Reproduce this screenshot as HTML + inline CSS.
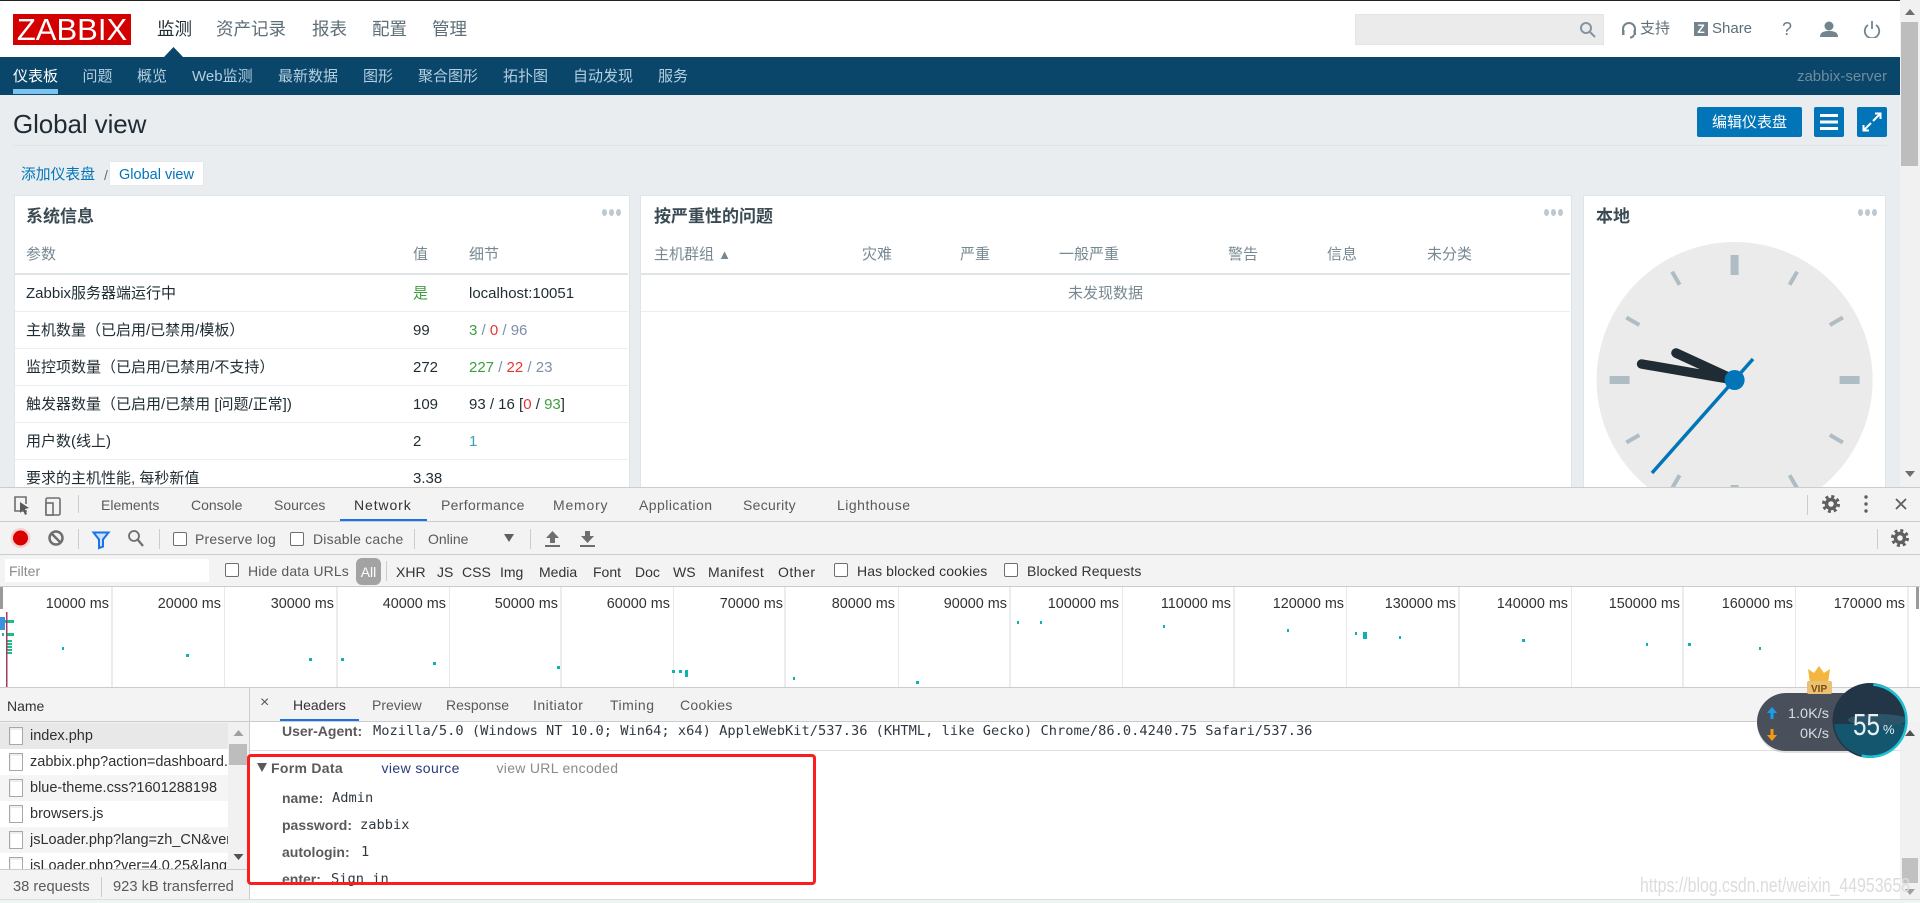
<!DOCTYPE html>
<html lang="zh"><head><meta charset="utf-8"><title>Zabbix Global view</title>
<style>
html,body{margin:0;padding:0;width:1920px;height:903px;overflow:hidden;background:#fff}
body{position:relative;font-family:"Liberation Sans","Noto Sans CJK SC",sans-serif;font-size:14px;color:#1f2c33}
.a{position:absolute;white-space:nowrap;line-height:20px;display:block}
.b{position:absolute;display:block}
#page{position:absolute;left:0;top:0;width:1920px;height:487px;overflow:hidden;background:#e9edf0}
.tn{font-size:17.5px;color:#5d6e78;top:19px}
.sn{font-size:15px;color:#b4cfe0;top:67px}
.wg{background:#fff;border:1px solid #dfe4e7;border-bottom:0;top:195px;height:300px}
.wt{font-size:17px;font-weight:bold;color:#3a4a52;top:207px}
.dots{font-size:0;top:209px;width:21px;height:8px}
.dots i{display:inline-block;width:5px;height:7px;border-radius:50%;background:#bdc9d0;margin-right:2px}
.th{font-size:15px;color:#778892;top:245px}
.td{font-size:15px;color:#1f2c33}
.ln{height:1px;background:#ebeef0}
.g{color:#3f9c3f}.r{color:#e33734}.s{color:#7d8ea6}
#dt{position:absolute;left:0;top:487px;width:1920px;height:416px;background:#f3f3f3;overflow:hidden}
.dl{color:#5a5a5a;font-size:14px}
.cb{position:absolute;width:12px;height:12px;border:1px solid #6e6e6e;border-radius:2px;background:#fff}
.dv{position:absolute;width:1px;background:#ccc}
.hl{position:absolute;height:1px;background:#ccc;left:0;width:1920px}
.fi{position:absolute;left:9px;width:12px;height:16px;background:#fff;border:1px solid #a8a8a8;box-shadow:inset 2px 3px 0 -1px #eee}
.fn{left:30px;color:#303030;font-size:14.5px;width:198px;overflow:hidden}
.mk{font-weight:bold;color:#5a5a5a;font-size:14px;left:282px}
.mv{font-family:"DejaVu Sans Mono","Liberation Mono",monospace;font-size:13.7px;color:#303942}
</style></head><body>
<div id="page">
<div class="b" style="left:0;top:0;width:1920px;height:57px;background:#fff"></div>
<div class="b" style="left:0;top:0;width:1920px;height:1px;background:#222"></div>
<div class="a" style="left:13px;top:14px;width:118px;height:31px;background:#d40000;color:#fff;font-size:31px;line-height:32px;text-align:center;overflow:hidden">ZABBIX</div>
<span class="a tn" style="left:157px;color:#1f2c33">监测</span>
<span class="a tn" style="left:216px">资产记录</span>
<span class="a tn" style="left:312px">报表</span>
<span class="a tn" style="left:372px">配置</span>
<span class="a tn" style="left:432px">管理</span>
<svg class="b" style="left:160px;top:46px" width="28" height="12"><path d="M4 11 L13.5 1 L23 11Z" fill="#0a466a"/></svg>

<div class="b" style="left:1355px;top:14px;width:247px;height:29px;background:#ebebeb;border:1px solid #e4e4e4"></div>
<svg class="b" style="left:1577px;top:20px" width="20" height="20" fill="none" stroke="#8594a0" stroke-width="2"><circle cx="9" cy="8" r="5"/><path d="M13 12l5 5"/></svg>
<svg class="b" style="left:1620px;top:20px" width="18" height="20" fill="none" stroke="#74848e" stroke-width="2"><path d="M3 14V9a6 6 0 0 1 12 0v5"/><rect x="2" y="10" width="2.5" height="5" fill="#74848e" stroke="none"/><rect x="13.5" y="10" width="2.5" height="5" fill="#74848e" stroke="none"/><path d="M14 15c-1 2-2 2.500-4 2.500"/></svg>
<span class="a" style="left:1640px;top:19px;font-size:15px;color:#5d6e78">支持</span>
<div class="a" style="left:1694px;top:22px;width:14px;height:14px;background:#74848e;color:#fff;font:bold 12px/14px 'Liberation Sans',sans-serif;text-align:center">Z</div>
<span class="a" style="left:1712px;top:19px;font-size:15px;color:#5d6e78">Share</span>
<span class="a" style="left:1782px;top:19px;font-size:18px;color:#6c7c86">?</span>
<svg class="b" style="left:1819px;top:20px" width="20" height="18" fill="#74848e"><circle cx="10" cy="6" r="4.500"/><path d="M1 17c0-5 4-6 9-6s9 1 9 6z"/></svg>
<svg class="b" style="left:1863px;top:20px" width="18" height="18" fill="none" stroke="#74848e" stroke-width="1.8"><path d="M5 5a7.200 7.200 0 1 0 8 0M9 1v8"/></svg>

<div class="b" style="left:0;top:57px;width:1900px;height:38px;background:#0a466a"></div>
<span class="a sn" style="left:13px;color:#fff">仪表板</span>
<div class="b" style="left:13px;top:89px;width:45px;height:5px;background:#7cc2ee"></div>
<span class="a sn" style="left:82.500px">问题</span>
<span class="a sn" style="left:137px">概览</span>
<span class="a sn" style="left:192px">Web监测</span>
<span class="a sn" style="left:278px">最新数据</span>
<span class="a sn" style="left:363px">图形</span>
<span class="a sn" style="left:418px">聚合图形</span>
<span class="a sn" style="left:503px">拓扑图</span>
<span class="a sn" style="left:573px">自动发现</span>
<span class="a sn" style="left:658px">服务</span>
<span class="a" style="right:33px;top:67px;font-size:15px;color:#6f8b9c">zabbix-server</span>

<span class="a" style="left:13px;top:110px;font-size:26px;line-height:28px;color:#1f2c33;letter-spacing:-.1px">Global view</span>
<div class="b" style="left:13px;top:145px;width:1874px;height:1px;background:#dfe4e7"></div>
<div class="a" style="left:1697px;top:107px;width:105px;height:30px;line-height:32px;background:#0275b8;color:#fff;text-align:center;font-size:15px;border-radius:2px">编辑仪表盘</div>
<div class="b" style="left:1814px;top:107px;width:30px;height:30px;background:#0275b8;border-radius:2px"><svg width="30" height="30" fill="#fff"><rect x="6" y="7" width="18" height="3"/><rect x="6" y="13.500" width="18" height="3"/><rect x="6" y="20" width="18" height="3"/></svg></div>
<div class="b" style="left:1857px;top:107px;width:30px;height:30px;background:#0275b8;border-radius:2px"><svg width="30" height="30" fill="none" stroke="#fff" stroke-width="2"><path d="M16 14l7-7M18 6.500h5.500V12M14 16l-7 7M6.500 18v5.500H12"/></svg></div>

<span class="a" style="left:21px;top:165px;font-size:14.800px;color:#0275b8">添加仪表盘</span>
<span class="a" style="left:104px;top:165px;font-size:14px;color:#5d6e78">/</span>
<div class="a" style="left:109px;top:161px;width:95px;height:25px;line-height:27px;background:#fff;border:1px solid #e6e9eb;box-sizing:border-box;color:#0275b8;text-align:center;font-size:14.500px">Global view</div>

<div class="b wg" style="left:14px;width:614px"></div>
<div class="b wg" style="left:640px;width:930px"></div>
<div class="b wg" style="left:1583px;width:301px"></div>

<span class="a wt" style="left:26px">系统信息</span>
<div class="b dots" style="left:602px"><i></i><i></i><i></i></div>
<span class="a th" style="left:26px">参数</span><span class="a th" style="left:413px">值</span><span class="a th" style="left:469px">细节</span>
<div class="b" style="left:15px;top:273px;width:613px;height:2px;background:#dfe4e7"></div>
<span class="a td" style="left:26px;top:284px">Zabbix服务器端运行中</span><span class="a td g" style="left:413px;top:284px">是</span><span class="a td" style="left:469px;top:284px">localhost:10051</span>
<div class="b ln" style="left:15px;top:311px;width:613px"></div>
<span class="a td" style="left:26px;top:321px">主机数量（已启用/已禁用/模板）</span><span class="a td" style="left:413px;top:321px">99</span><span class="a td" style="left:469px;top:321px"><span class="g">3</span> <span class="s">/</span> <span class="r">0</span> <span class="s">/ 96</span></span>
<div class="b ln" style="left:15px;top:348px;width:613px"></div>
<span class="a td" style="left:26px;top:358px">监控项数量（已启用/已禁用/不支持）</span><span class="a td" style="left:413px;top:358px">272</span><span class="a td" style="left:469px;top:358px"><span class="g">227</span> <span class="s">/</span> <span class="r">22</span> <span class="s">/ 23</span></span>
<div class="b ln" style="left:15px;top:385px;width:613px"></div>
<span class="a td" style="left:26px;top:395px">触发器数量（已启用/已禁用 [问题/正常])</span><span class="a td" style="left:413px;top:395px">109</span><span class="a td" style="left:469px;top:395px">93 / 16 [<span class="r">0</span> / <span class="g">93</span>]</span>
<div class="b ln" style="left:15px;top:422px;width:613px"></div>
<span class="a td" style="left:26px;top:432px">用户数(线上)</span><span class="a td" style="left:413px;top:432px">2</span><span class="a td" style="left:469px;top:432px;color:#3aa0b5">1</span>
<div class="b ln" style="left:15px;top:459px;width:613px"></div>
<span class="a td" style="left:26px;top:469px">要求的主机性能, 每秒新值</span><span class="a td" style="left:413px;top:469px">3.38</span>

<span class="a wt" style="left:654px">按严重性的问题</span>
<div class="b dots" style="left:1544px"><i></i><i></i><i></i></div>
<span class="a th" style="left:654px">主机群组 <span style="font-size:13px">▲</span></span><span class="a th" style="left:862px">灾难</span><span class="a th" style="left:960px">严重</span><span class="a th" style="left:1059px">一般严重</span><span class="a th" style="left:1228px">警告</span><span class="a th" style="left:1327px">信息</span><span class="a th" style="left:1427px">未分类</span>
<div class="b" style="left:641px;top:273px;width:929px;height:2px;background:#dfe4e7"></div>
<span class="a" style="left:1068px;top:284px;font-size:15px;color:#778892">未发现数据</span>
<div class="b ln" style="left:641px;top:311px;width:929px"></div>

<span class="a wt" style="left:1596px">本地</span>
<div class="b dots" style="left:1858px"><i></i><i></i><i></i></div>
<svg class="b" style="left:1590px;top:236px" width="290" height="290">
<g transform="translate(144.600,144)">
<circle r="138" fill="#ebebeb"/>
<g fill="#aebcc4">
<rect x="-4" y="-125" width="8" height="20"/>
<rect x="-4" y="-125" width="8" height="20" transform="rotate(90)"/>
<rect x="-4" y="-125" width="8" height="20" transform="rotate(180)"/>
<rect x="-4" y="-125" width="8" height="20" transform="rotate(270)"/>
<rect x="-2" y="-125" width="4" height="15" transform="rotate(30)"/>
<rect x="-2" y="-125" width="4" height="15" transform="rotate(60)"/>
<rect x="-2" y="-125" width="4" height="15" transform="rotate(120)"/>
<rect x="-2" y="-125" width="4" height="15" transform="rotate(150)"/>
<rect x="-2" y="-125" width="4" height="15" transform="rotate(210)"/>
<rect x="-2" y="-125" width="4" height="15" transform="rotate(240)"/>
<rect x="-2" y="-125" width="4" height="15" transform="rotate(300)"/>
<rect x="-2" y="-125" width="4" height="15" transform="rotate(330)"/>
</g>
<path d="M0 0L-58.600-27M0 0L-93-16" stroke="#1f2c33" stroke-width="9.500" stroke-linecap="round" fill="none"/>
<path d="M-82.600 93L18.400-21" stroke="#0275b8" stroke-width="3.500" fill="none"/>
<circle r="10" fill="#0275b8"/>
</g></svg>

<div class="b" style="left:1900px;top:0;width:20px;height:487px;background:#f1f1f1"></div>
<div class="b" style="left:1901px;top:22px;width:17px;height:144px;background:#bdbdbd"></div>
<svg class="b" style="left:1900px;top:0" width="20" height="487" fill="#6e6e6e"><path d="M10 9l5 6H5zM5 471h10l-5 6z"/></svg>
</div>

<div id="dt">
<div class="hl" style="top:0"></div>
<svg class="b" style="left:10px;top:8px" width="60" height="26" fill="none" stroke="#6e6e6e" stroke-width="1.600"><path d="M17 16H5V2h11v7"/><path d="M10 7l9 6-4 1 2 5-2 1-2-5-3 3z" fill="#5a5a5a" stroke="none"/><rect x="36" y="3" width="14" height="17" rx="1.500"/><rect x="36" y="8" width="7" height="12" fill="#f3f3f3"/></svg>
<div class="dv" style="left:78px;top:8px;height:18px"></div>
<span class="a dl" style="left:101px;top:8px">Elements</span>
<span class="a dl" style="left:191px;top:8px">Console</span>
<span class="a dl" style="left:274px;top:8px">Sources</span>
<span class="a dl" style="left:354px;top:8px;color:#333;letter-spacing:.9px">Network</span>
<span class="a dl" style="left:441px;top:8px;letter-spacing:.33px">Performance</span>
<span class="a dl" style="left:553px;top:8px;letter-spacing:.8px">Memory</span>
<span class="a dl" style="left:639px;top:8px;letter-spacing:.45px">Application</span>
<span class="a dl" style="left:743px;top:8px;letter-spacing:.3px">Security</span>
<span class="a dl" style="left:837px;top:8px;letter-spacing:.5px">Lighthouse</span>
<div class="b" style="left:340px;top:32px;width:87px;height:3px;background:#1a73e8"></div>
<div class="dv" style="left:1807px;top:8px;height:20px"></div>
<svg class="b" style="left:1821px;top:7px" width="20" height="20"><circle cx="10" cy="10" r="4.500" fill="none" stroke="#5f5f5f" stroke-width="3.500"/><circle cx="10" cy="10" r="7.500" fill="none" stroke="#5f5f5f" stroke-width="3" stroke-dasharray="3 2.900"/></svg>
<svg class="b" style="left:1862px;top:7px" width="8" height="20" fill="#5f5f5f"><circle cx="4" cy="3" r="1.700"/><circle cx="4" cy="10" r="1.700"/><circle cx="4" cy="17" r="1.700"/></svg>
<svg class="b" style="left:1894px;top:10px" width="14" height="14" stroke="#5f5f5f" stroke-width="1.800"><path d="M2 2l10 10M12 2L2 12"/></svg>
<div class="hl" style="top:34px"></div>

<svg class="b" style="left:8px;top:38px" width="140" height="26"><circle cx="12.500" cy="13" r="10" fill="#f7d0d0"/><circle cx="12.500" cy="13" r="7.500" fill="#d90000"/><circle cx="48" cy="13" r="6.500" fill="none" stroke="#6e6e6e" stroke-width="2.500"/><path d="M43.500 8.500l9 9" stroke="#6e6e6e" stroke-width="2.500"/><path d="M85.500 7.500h15l-5.500 7v7l-4 1.500v-8.500z" fill="#cfe2fb" stroke="#1a73e8" stroke-width="2"/><circle cx="126" cy="11" r="5" fill="none" stroke="#6e6e6e" stroke-width="1.800"/><path d="M130 15l5 6" stroke="#6e6e6e" stroke-width="2.200"/></svg>
<div class="dv" style="left:78px;top:42px;height:20px"></div>
<div class="dv" style="left:159px;top:42px;height:20px"></div>
<div class="cb" style="left:173px;top:45px"></div><span class="a dl" style="left:195px;top:42px;letter-spacing:.2px">Preserve log</span>
<div class="cb" style="left:290px;top:45px"></div><span class="a dl" style="left:313px;top:42px;letter-spacing:.2px">Disable cache</span>
<div class="dv" style="left:414px;top:42px;height:20px"></div>
<span class="a dl" style="left:428px;top:42px">Online</span>
<svg class="b" style="left:504px;top:47px" width="10" height="8"><path d="M0 0h10L5 8z" fill="#5f5f5f"/></svg>
<div class="dv" style="left:530px;top:42px;height:20px"></div>
<svg class="b" style="left:545px;top:43px" width="52" height="18" fill="#6e6e6e"><path d="M7.500 1L14 8H10V13H5V8H1zM0 15h15v2H0zM35 15h15v2H35zM40 1h5v5h4l-6.500 7L36 6h4z"/></svg>
<div class="dv" style="left:1877px;top:42px;height:20px"></div>
<svg class="b" style="left:1890px;top:41px" width="20" height="20"><circle cx="10" cy="10" r="4.500" fill="none" stroke="#5f5f5f" stroke-width="3.500"/><circle cx="10" cy="10" r="7.500" fill="none" stroke="#5f5f5f" stroke-width="3" stroke-dasharray="3 2.900"/></svg>
<div class="hl" style="top:67px"></div>

<div class="b" style="left:5px;top:72px;width:204px;height:23px;background:#fff"></div>
<span class="a" style="left:9px;top:74px;color:#8a8a8a;font-size:14px">Filter</span>
<div class="cb" style="left:225px;top:76px"></div><span class="a dl" style="left:248px;top:74px;letter-spacing:.15px">Hide data URLs</span>
<div class="a" style="left:356px;top:71px;width:25px;height:27px;line-height:29px;background:#a3a3a3;border-radius:6px;color:#fff;text-align:center;font-size:14px">All</div>
<div class="dv" style="left:386px;top:74px;height:20px"></div>
<span class="a dl" style="left:396px;top:75px;color:#333">XHR</span>
<span class="a dl" style="left:437px;top:75px;color:#333">JS</span>
<span class="a dl" style="left:462px;top:75px;color:#333">CSS</span>
<span class="a dl" style="left:500px;top:75px;color:#333">Img</span>
<span class="a dl" style="left:539px;top:75px;color:#333">Media</span>
<span class="a dl" style="left:593px;top:75px;color:#333">Font</span>
<span class="a dl" style="left:635px;top:75px;color:#333">Doc</span>
<span class="a dl" style="left:673px;top:75px;color:#333">WS</span>
<span class="a dl" style="left:708px;top:75px;color:#333;letter-spacing:.4px">Manifest</span>
<span class="a dl" style="left:778px;top:75px;color:#333;letter-spacing:.5px">Other</span>
<div class="cb" style="left:834px;top:76px"></div><span class="a dl" style="left:857px;top:74px;color:#333;letter-spacing:.1px">Has blocked cookies</span>
<div class="cb" style="left:1004px;top:76px"></div><span class="a dl" style="left:1027px;top:74px;color:#333;letter-spacing:.1px">Blocked Requests</span>
<div class="hl" style="top:99px;background:#ccc"></div>

<svg class="b" style="left:0;top:100px" width="1920" height="100" font-family="'Liberation Sans',sans-serif" font-size="14.4" fill="#333">
<rect width="1920" height="100" fill="#fff"/>
<g stroke="#e8e8e8" stroke-width="1"><path d="M224.500 0V100M449.500 0V100M673.500 0V100M898.500 0V100M1122.500 0V100M1346.500 0V100M1571.500 0V100M1795.500 0V100"/></g>
<g stroke="#e0e0e0" stroke-width="1.200"><path d="M112 0V100M337 0V100M561 0V100M785 0V100M1010 0V100M1234 0V100M1459 0V100M1683 0V100M1908 0V100"/></g>
<g text-anchor="end">
<text x="109" y="21">10000 ms</text><text x="221" y="21">20000 ms</text><text x="334" y="21">30000 ms</text><text x="446" y="21">40000 ms</text><text x="558" y="21">50000 ms</text><text x="670" y="21">60000 ms</text><text x="783" y="21">70000 ms</text><text x="895" y="21">80000 ms</text><text x="1007" y="21">90000 ms</text><text x="1119" y="21">100000 ms</text><text x="1231" y="21">110000 ms</text><text x="1344" y="21">120000 ms</text><text x="1456" y="21">130000 ms</text><text x="1568" y="21">140000 ms</text><text x="1680" y="21">150000 ms</text><text x="1793" y="21">160000 ms</text><text x="1905" y="21">170000 ms</text>
</g>
<rect x="0" y="0" width="3" height="22" fill="#9a9a9a"/><rect x="1916" y="0" width="3" height="22" fill="#9a9a9a"/>
<rect x="0" y="30" width="5" height="13" fill="#3d8fe0"/><rect x="5" y="33" width="9" height="3" fill="#17c08a"/>
<rect x="2" y="46" width="2" height="3" fill="#3aa"/><rect x="7" y="46" width="7" height="3" fill="#17c08a"/>
<rect x="7" y="53" width="5" height="2" fill="#17c08a"/><rect x="7" y="56" width="5" height="2" fill="#17c08a"/><rect x="7" y="59" width="5" height="2" fill="#17c08a"/><rect x="7" y="62" width="5" height="2" fill="#17c08a"/><rect x="7" y="65" width="5" height="2" fill="#17c08a"/>
<rect x="6" y="25" width="1.500" height="75" fill="#a33c5c"/>
<g fill="#12b0ae">
<rect x="62" y="60" width="2" height="3"/><rect x="186" y="67" width="3" height="3"/><rect x="309" y="71" width="3" height="3"/><rect x="341" y="71" width="3" height="3"/><rect x="433" y="75" width="3" height="3"/><rect x="557" y="79" width="3" height="3"/><rect x="672" y="83" width="3" height="3"/><rect x="679" y="83" width="3" height="3"/><rect x="685" y="83" width="3" height="7"/><rect x="793" y="90" width="2" height="3"/><rect x="916" y="94" width="3" height="3"/>
<rect x="1017" y="34" width="2" height="3"/><rect x="1040" y="34" width="2" height="3"/><rect x="1163" y="38" width="2" height="3"/><rect x="1287" y="42" width="2" height="3"/><rect x="1355" y="45" width="2" height="3"/><rect x="1363" y="45" width="4" height="7"/><rect x="1399" y="49" width="2" height="3"/><rect x="1522" y="52" width="3" height="3"/><rect x="1646" y="56" width="2" height="3"/><rect x="1688" y="56" width="3" height="3"/><rect x="1759" y="60" width="2" height="3"/>
</g></svg>
<div class="hl" style="top:200px"></div>

<div class="dv" style="left:249px;top:200px;height:216px;background:#ccc"></div>
<span class="a" style="left:7px;top:209px;color:#333;font-size:14px">Name</span>
<div class="b" style="left:0;top:234px;width:249px;height:1px;background:#ccc"></div>
<div class="b" style="left:0;top:236px;width:228px;height:26px;background:#e8e8e8"></div>
<div class="b" style="left:0;top:262px;width:228px;height:26px;background:#fff"></div>
<div class="b" style="left:0;top:288px;width:228px;height:26px;background:#f5f5f5"></div>
<div class="b" style="left:0;top:314px;width:228px;height:26px;background:#fff"></div>
<div class="b" style="left:0;top:340px;width:228px;height:26px;background:#f5f5f5"></div>
<div class="b" style="left:0;top:366px;width:228px;height:16px;background:#fff;overflow:hidden"></div>
<div class="fi" style="top:240px"></div><span class="a fn" style="top:239px">index.php</span>
<div class="fi" style="top:266px"></div><span class="a fn" style="top:265px">zabbix.php?action=dashboard.view</span>
<div class="fi" style="top:292px"></div><span class="a fn" style="top:291px">blue-theme.css?1601288198</span>
<div class="fi" style="top:318px"></div><span class="a fn" style="top:317px">browsers.js</span>
<div class="fi" style="top:344px"></div><span class="a fn" style="top:343px">jsLoader.php?lang=zh_CN&amp;ver=4.0.25</span>
<div class="b" style="left:0;top:366px;width:228px;height:16px;overflow:hidden"><div class="fi" style="top:4px"></div><span class="a fn" style="top:3px">jsLoader.php?ver=4.0.25&amp;lang=zh_CN</span></div>
<div class="b" style="left:228px;top:235px;width:21px;height:147px;background:#f1f1f1"></div>
<div class="b" style="left:229px;top:257px;width:18px;height:21px;background:#bdbdbd"></div>
<svg class="b" style="left:228px;top:235px" width="21" height="147"><path d="M10.500 8l5 6h-10z" fill="#a0a0a0"/><path d="M5.500 132h10l-5 6z" fill="#505050"/></svg>
<div class="b" style="left:0;top:382px;width:249px;height:1px;background:#ccc"></div>
<span class="a dl" style="left:13px;top:390px;font-size:14.7px">38 requests</span>
<div class="dv" style="left:101px;top:390px;height:20px"></div>
<span class="a dl" style="left:113px;top:390px;font-size:14.7px">923 kB transferred</span>

<span class="a" style="left:260px;top:206px;color:#5a5a5a;font-size:16px">×</span>
<span class="a" style="left:293px;top:208px;color:#333">Headers</span>
<span class="a dl" style="left:372px;top:208px">Preview</span>
<span class="a dl" style="left:446px;top:208px">Response</span>
<span class="a dl" style="left:533px;top:208px;letter-spacing:.5px">Initiator</span>
<span class="a dl" style="left:610px;top:208px;letter-spacing:.5px">Timing</span>
<span class="a dl" style="left:680px;top:208px;letter-spacing:.3px">Cookies</span>
<div class="b" style="left:280px;top:232px;width:79px;height:3px;background:#1a73e8"></div>
<div class="b" style="left:250px;top:234px;width:1650px;height:1px;background:#ccc"></div>

<div class="b" style="left:250px;top:235px;width:1650px;height:177px;background:#fff"></div>
<span class="a mk" style="top:234px">User-Agent:</span>
<span class="a mv" style="left:373px;top:234px">Mozilla/5.0 (Windows NT 10.0; Win64; x64) AppleWebKit/537.36 (KHTML, like Gecko) Chrome/86.0.4240.75 Safari/537.36</span>
<div class="b" style="left:250px;top:263px;width:1650px;height:1px;background:#e0e0e0"></div>
<svg class="b" style="left:257px;top:276px" width="10" height="9"><path d="M0 0h10L5 9z" fill="#5a5a5a"/></svg>
<span class="a" style="left:271px;top:271px;font-weight:bold;color:#5a5a5a;letter-spacing:.3px">Form Data</span>
<span class="a" style="left:381.500px;top:271px;color:#2a3a7a;letter-spacing:.4px">view source</span>
<span class="a" style="left:496.500px;top:271px;color:#8a8a8a;letter-spacing:.3px">view URL encoded</span>
<span class="a mk" style="top:301px">name:</span><span class="a mv" style="left:332px;top:301px">Admin</span>
<span class="a mk" style="top:328px">password:</span><span class="a mv" style="left:360px;top:328px">zabbix</span>
<span class="a mk" style="top:355px">autologin:</span><span class="a mv" style="left:361px;top:355px">1</span>
<span class="a mk" style="top:382px">enter:</span><span class="a mv" style="left:331px;top:382px">Sign in</span>
<div class="b" style="left:250px;top:399px;width:1650px;height:13px;background:#fff"></div>
<div class="b" style="left:247px;top:267px;width:563px;height:125px;border:3.500px solid #fb1e1e;border-radius:4px;box-sizing:content-box"></div>
<div class="b" style="left:0;top:412px;width:1920px;height:1px;background:#ddd"></div>
<div class="b" style="left:0;top:413px;width:1920px;height:3px;background:#eef6f3"></div>

<div class="b" style="left:1900px;top:235px;width:20px;height:177px;background:#f1f1f1"></div>
<div class="b" style="left:1902px;top:371px;width:16px;height:25px;background:#c1c1c1"></div>
<svg class="b" style="left:1900px;top:235px" width="20" height="177"><path d="M10 8l5 6H5z" fill="#505050"/><path d="M5 167h10l-5 6z" fill="#a0a0a0"/></svg>
</div>

<svg class="b" style="left:1630px;top:870px" width="285" height="30"><text x="10" y="22" font-family="'Liberation Sans',sans-serif" font-size="20" fill="#dcdcdc" textLength="270" lengthAdjust="spacingAndGlyphs">https://blog.csdn.net/weixin_44953658</text></svg>

<svg class="b" style="left:1750px;top:660px" width="170" height="105">
<defs><clipPath id="cb"><circle cx="120" cy="60.500" r="36"/></clipPath></defs>
<path d="M36 35H110V93H36A29 29 0 0 1 36 35Z" fill="#000" opacity=".12"/>
<path d="M36 33H110V91H36A29 29 0 0 1 36 33Z" fill="#4a4f5c"/>
<g>
<path d="M58 9l6 4 5-7 5 7 6-4-2 14H60z" fill="#f4b63f"/>
<rect x="57" y="21" width="25" height="13" rx="2" fill="#eac172"/>
<text x="61" y="32" font-family="'Liberation Sans',sans-serif" font-size="10" font-weight="bold" fill="#7a4a10">VIP</text>
</g>
<path d="M22 47l-5 6h3.500v6h3v-6H27z" fill="#16a0ea"/>
<path d="M20.500 69v6H17l5 6 5-6h-3.500v-6z" fill="#f79a10"/>
<g font-family="'Liberation Sans',sans-serif" font-size="14" fill="#d8dde2" text-anchor="end">
<text x="79" y="58" textLength="41" lengthAdjust="spacingAndGlyphs">1.0K/s</text>
<text x="79" y="78" textLength="29" lengthAdjust="spacingAndGlyphs">0K/s</text>
</g>
<circle cx="120" cy="60.500" r="37.500" fill="#223648"/>
<g clip-path="url(#cb)"><rect x="80" y="64" width="80" height="40" fill="#15566f"/><ellipse cx="128" cy="60" rx="30" ry="6" fill="#2c5468"/></g>
<path d="M123.300 24.800A36 36 0 1 1 111.700 95.600" fill="none" stroke="#1cc2d4" stroke-width="2.500"/>
<text x="103" y="75" font-family="'Liberation Sans',sans-serif" font-size="31" fill="#e8eef2" textLength="27" lengthAdjust="spacingAndGlyphs">55</text>
<text x="133" y="74" font-family="'Liberation Sans',sans-serif" font-size="13" fill="#e8eef2">%</text>
</svg>
</body></html>
